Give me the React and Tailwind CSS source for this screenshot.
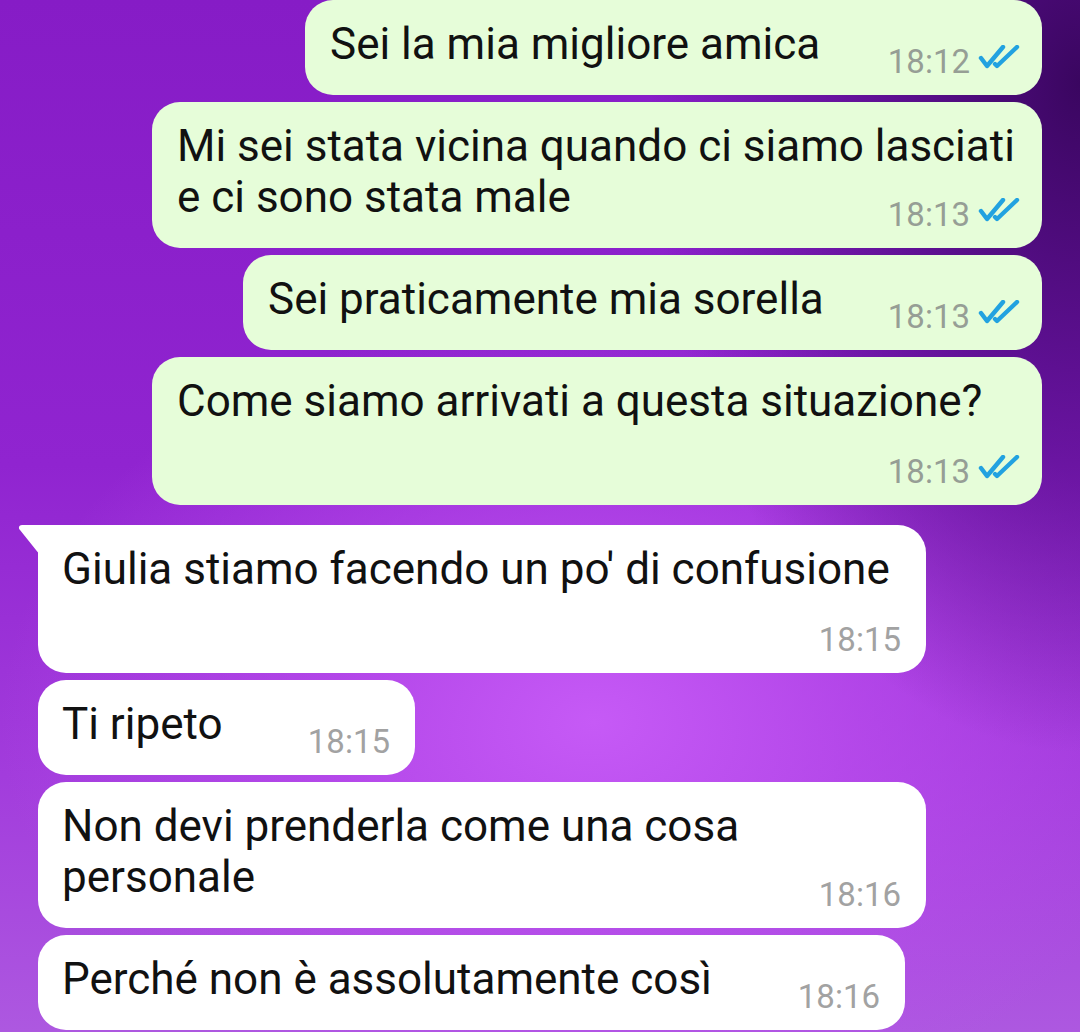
import React from 'react';

const Ticks = () => (
  <svg width="42" height="24" viewBox="0 0 42 24" fill="none" stroke="#22a2e0" strokeWidth="4.4" strokeLinecap="round" strokeLinejoin="round" className="-mt-[1px] ml-[8px]">
    <path d="M3 13l6 8L25 2" />
    <path d="M17 19l2 2L39 2" />
  </svg>
);

const Meta = ({ time, out }) => (
  <div className="flex items-start">
    <span className={`text-[33px] leading-[32px] ${out ? 'text-[#969e95]' : 'text-[#a2a2a2]'}`}>{time}</span>
    {out && <Ticks />}
  </div>
);

const Bubble = ({ out, width, lines, time, layout, tail }) => {
  const base = `relative rounded-[28px] pt-[19px] pb-[17px] ${out ? 'bg-[#e6fdd9] pl-[25px] pr-[22px] self-end mr-[38px]' : 'bg-white pl-[24px] pr-[25px] self-start ml-[38px]'} ${tail ? 'rounded-tl-none' : ''}`;
  const text = (
    <div className="text-[44px] leading-[51px] text-[#111] whitespace-nowrap">
      {lines.map((l, i) => (
        <div key={i}>{l}</div>
      ))}
    </div>
  );

  return (
    <div className={base} style={{ width }}>
      {tail && (
        <svg width="22" height="30" viewBox="0 0 22 30" className="absolute -left-[20px] top-0">
          <path d="M22 0H4C1 0 0 3 2 5L22 30Z" fill="#fff" />
        </svg>
      )}
      {layout === 'inline' && (
        <div className="flex items-start justify-between">
          <div className="pb-[8px]">{text}</div>
          <div className="self-end">
            <Meta time={time} out={out} />
          </div>
        </div>
      )}
      {layout === 'overlap' && (
        <div className="flex flex-col">
          {text}
          <div className="flex justify-end -mt-[24px]">
            <Meta time={time} out={out} />
          </div>
        </div>
      )}
      {layout === 'below' && (
        <div className="flex flex-col">
          {text}
          <div className="flex justify-end mt-[29px]">
            <Meta time={time} out={out} />
          </div>
        </div>
      )}
    </div>
  );
};

export default function App() {
  return (
    <div
      className="w-full h-[1032px] overflow-hidden flex flex-col bg-[radial-gradient(ellipse_40%_65%_at_100%_8%,#3a0660_0%,#540c86cc_45%,#7a18b800_100%),radial-gradient(ellipse_55%_40%_at_55%_70%,#c65af6_0%,#bd4ef0aa_45%,#a83ee000_100%),linear-gradient(180deg,#861cc6_0%,#9024d0_45%,#a23cdc_75%,#ad58e0_100%)]"
      style={{ fontFamily: 'Roboto, "Noto Sans", sans-serif' }}
    >
      <div className="flex flex-col gap-[7px]">
        <Bubble out width={737} lines={['Sei la mia migliore amica']} time="18:12" layout="inline" />
        <Bubble out width={890} lines={['Mi sei stata vicina quando ci siamo lasciati', 'e ci sono stata male']} time="18:13" layout="overlap" />
        <Bubble out width={799} lines={['Sei praticamente mia sorella']} time="18:13" layout="inline" />
        <Bubble out width={890} lines={['Come siamo arrivati a questa situazione?']} time="18:13" layout="below" />
      </div>
      <div className="flex flex-col gap-[7px] mt-[20px]">
        <Bubble tail width={888} lines={["Giulia stiamo facendo un po' di confusione"]} time="18:15" layout="below" />
        <Bubble width={377} lines={['Ti ripeto']} time="18:15" layout="inline" />
        <Bubble width={888} lines={['Non devi prenderla come una cosa', 'personale']} time="18:16" layout="overlap" />
        <Bubble width={867} lines={['Perché non è assolutamente così']} time="18:16" layout="inline" />
      </div>
    </div>
  );
}
